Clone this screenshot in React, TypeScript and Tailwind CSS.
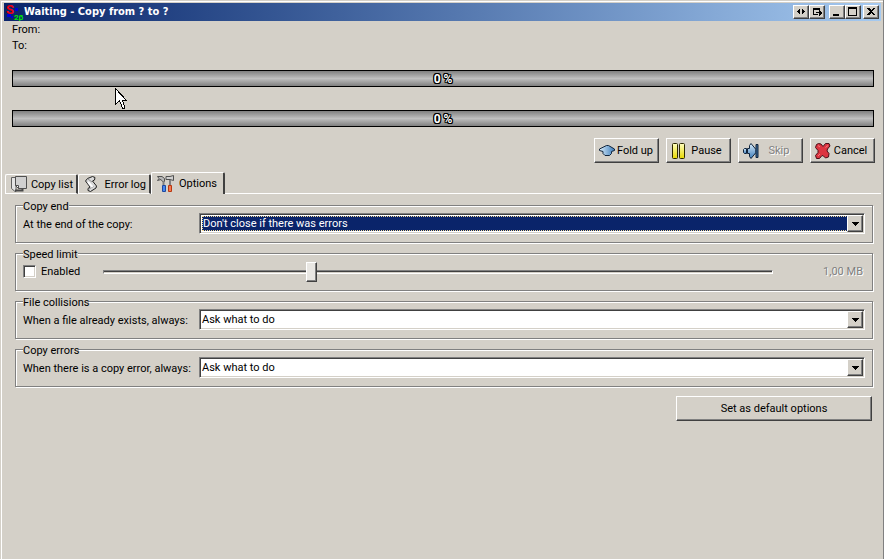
import { useState, type ReactNode } from 'react'

const raised = 'border border-t-white border-l-white border-r-[#404040] border-b-[#404040] bg-[#d4d0c8] shadow-[inset_-1px_-1px_0_#808080]'

const endChoices = ["Don't close if there was errors", "Don't close", 'Close']
const collisionChoices = ['Ask what to do', 'Cancel the copy', 'Skip', 'Overwrite', 'Rename']
const errorChoices = ['Ask what to do', 'Cancel the copy', 'Skip', 'Try again']

export default function App() {
  const [limited, setLimited] = useState(false)
  const [speed, setSpeed] = useState(308)

  return (
    <main className="relative min-h-screen border-r border-r-[#808080] bg-[#d4d0c8] pt-px pl-px font-[Roboto,'Liberation_Sans',sans-serif] text-[11px] leading-4 text-black">
      <div className="min-h-[558px] border-t border-l border-white pt-px pr-[2px] pl-[2px]">
        <TitleBar />

        <section className="pt-px pr-[7px] pl-2">
          <p className="h-4">From:</p>
          <p className="mb-4 h-4">To:</p>
          <ProgressBar value={0} />
          <div className="h-[23px]" />
          <ProgressBar value={0} />
          <div className="-mr-px mt-[11px] flex justify-end gap-[7px]">
            <ToolButton icon={<FoldIcon />} label="Fold up" />
            <ToolButton icon={<PauseIcon />} label="Pause" />
            <ToolButton icon={<SkipIcon />} label="Skip" disabled />
            <ToolButton icon={<CancelIcon />} label="Cancel" />
          </div>
        </section>

        <div role="tablist" className="mt-[9px] flex items-end pl-px">
          <Tab icon={<ListIcon />} label="Copy list" />
          <Tab icon={<LogIcon />} label="Error log" />
          <Tab icon={<ToolsIcon />} label="Options" active />
          <div className="h-px grow bg-white" />
        </div>

        <section role="tabpanel" className="flex flex-col gap-1 pt-[5px] pr-2 pl-[11px]">
          <Group title="Copy end">
            <label htmlFor="end" className="w-[176px] shrink-0 pt-[2px]">At the end of the copy:</label>
            <Combo id="end" choices={endChoices} highlighted />
          </Group>
          <Group title="Speed limit">
            <label className="flex w-[80px] shrink-0 items-center gap-[5px]">
              <input
                type="checkbox"
                checked={limited}
                onChange={e => setLimited(e.target.checked)}
                className="size-[13px] appearance-none border border-t-[#808080] border-r-white border-b-white border-l-[#808080] bg-white shadow-[inset_1px_1px_0_#404040,inset_-1px_-1px_0_#d4d0c8] checked:bg-[#404040]"
              />
              Enabled
            </label>
            <input
              type="range"
              aria-label="Speed limit"
              max={1000}
              value={speed}
              onChange={e => setSpeed(Number(e.target.value))}
              className="h-5 min-w-0 grow appearance-none bg-transparent [&::-webkit-slider-runnable-track]:h-1 [&::-webkit-slider-runnable-track]:border [&::-webkit-slider-runnable-track]:border-t-[#808080] [&::-webkit-slider-runnable-track]:border-r-white [&::-webkit-slider-runnable-track]:border-b-white [&::-webkit-slider-runnable-track]:border-l-[#808080] [&::-webkit-slider-runnable-track]:bg-[linear-gradient(#404040_50%,#d4d0c8_50%)] [&::-webkit-slider-thumb]:-mt-[9px] [&::-webkit-slider-thumb]:h-5 [&::-webkit-slider-thumb]:w-[11px] [&::-webkit-slider-thumb]:appearance-none [&::-webkit-slider-thumb]:border [&::-webkit-slider-thumb]:border-t-white [&::-webkit-slider-thumb]:border-r-[#404040] [&::-webkit-slider-thumb]:border-b-[#404040] [&::-webkit-slider-thumb]:border-l-white [&::-webkit-slider-thumb]:bg-[#e9e7e3] [&::-webkit-slider-thumb]:shadow-[inset_-1px_-1px_0_#808080]"
            />
            <span className="w-[92px] shrink-0 pr-[2px] text-right text-[#808080] [text-shadow:1px_1px_0_white]">1,00 MB</span>
          </Group>
          <Group title="File collisions">
            <label htmlFor="collision" className="w-[176px] shrink-0 pt-[2px]">When a file already exists, always:</label>
            <Combo id="collision" choices={collisionChoices} />
          </Group>
          <Group title="Copy errors">
            <label htmlFor="error" className="w-[176px] shrink-0 pt-[2px]">When there is a copy error, always:</label>
            <Combo id="error" choices={errorChoices} />
          </Group>
          <button className={`mt-[5px] mr-px h-[25px] w-[196px] self-end ${raised}`}>Set as default options</button>
        </section>
      </div>

      <svg className="pointer-events-none absolute top-[88px] left-[115px]" width="12" height="21" shapeRendering="crispEdges">
        <path d="M0.5 0.5V16.5L4.5 12.5L7.5 20H9.5V18L7.5 12.5H11.5Z" fill="white" stroke="black" />
      </svg>
    </main>
  )
}

function TitleBar() {
  return (
    <header className="flex h-[18px] items-center bg-linear-to-r from-[#0a246a] to-[#a6caf0] pr-[2px] pl-[2px]">
      <svg width="16" height="16" className="shrink-0 overflow-visible">
        <path d="M9 4h3v3h-3zM1 10h4v3h-4zM5 12h2v2h-2z" fill="#0000d8" />
        <text x="0" y="10" fontSize="13" fontWeight="bold" fill="#f00010">S</text>
        <text x="8" y="16" fontSize="8" fontWeight="bold" fill="#00e800">2β</text>
      </svg>
      <h1 className="ml-[2px] grow font-['DejaVu_Sans_Condensed','DejaVu_Sans',sans-serif] text-[11px] font-bold text-white">
        Waiting - Copy from ? to ?
      </h1>
      <CaptionButton label="Resize"><path d="M6 3v5L3 5.5zM8 3v5L11 5.5z" /></CaptionButton>
      <CaptionButton label="Send to tray"><path d="M3 2h7v2H4v4h4v1H3zM9 3h1v2h-1zM6 6h3V4l3 3-3 3V7H6z" /></CaptionButton>
      <span className="w-1" />
      <CaptionButton label="Minimize"><path d="M3 8h6v2H3z" /></CaptionButton>
      <CaptionButton label="Maximize"><path fillRule="evenodd" d="M2 1h9v9H2zM3 3v6h7V3z" /></CaptionButton>
      <span className="w-[2px]" />
      <CaptionButton label="Close"><path d="M3 2h2l2 2 2-2h2L8 5.5 11 9H9L7 7 5 9H3l3-3.500z" /></CaptionButton>
    </header>
  )
}

function CaptionButton({ label, children }: { label: string; children: ReactNode }) {
  return (
    <button aria-label={label} className={`h-[14px] w-4 shrink-0 ${raised}`}>
      <svg width="14" height="12" shapeRendering="crispEdges">{children}</svg>
    </button>
  )
}

function ProgressBar({ value }: { value: number }) {
  return (
    <div
      role="progressbar"
      aria-valuenow={value}
      className="flex h-[17px] items-center justify-center border border-black bg-linear-to-b from-[#808080] via-[#c0c0c0] to-[#808080] text-[12px] leading-[14px] font-bold text-white [text-shadow:1px_0_black,-1px_0_black,0_1px_black,0_-1px_black,1px_1px_black,-1px_-1px_black,1px_-1px_black,-1px_1px_black]"
    >
      {value} %
    </div>
  )
}

function ToolButton({ icon, label, disabled }: { icon: ReactNode; label: string; disabled?: boolean }) {
  return (
    <button disabled={disabled} className={`flex h-[25px] w-[65px] items-center pr-1 pl-1 ${raised}`}>
      {icon}
      <span className={`grow text-center whitespace-nowrap ${disabled ? 'text-[#808080] [text-shadow:1px_1px_0_white]' : ''}`}>
        {label}
      </span>
    </button>
  )
}

function Tab({ icon, label, active }: { icon: ReactNode; label: string; active?: boolean }) {
  const look = active
    ? 'h-[22px] w-[74px] pb-px pr-[6px]'
    : 'h-[20px] w-[73px] border-b border-b-white pr-[3px]'
  return (
    <button role="tab" aria-selected={!!active} className={`flex items-center justify-between rounded-t-[2px] border-t border-r-2 border-l border-t-white border-r-[#404040] border-l-white pl-[5px] whitespace-nowrap ${look}`}>
      {icon}
      <span className="pt-[2px]">{label}</span>
    </button>
  )
}

function Group({ title, children }: { title: string; children: ReactNode }) {
  return (
    <fieldset className="min-w-0 border border-[#808080] px-[7px] pt-[2px] pb-2 shadow-[inset_1px_1px_0_white,1px_1px_0_white]">
      <legend className="h-3 bg-[#d4d0c8] leading-[16px]">{title}</legend>
      <div className="flex h-[21px] items-center">{children}</div>
    </fieldset>
  )
}

function Combo({ id, choices, highlighted }: { id: string; choices: string[]; highlighted?: boolean }) {
  return (
    <div className="relative h-[21px] grow border border-t-[#808080] border-r-white border-b-white border-l-[#808080] bg-white p-[2px] shadow-[inset_1px_1px_0_#404040,inset_-1px_-1px_0_#d4d0c8]">
      <select
        id={id}
        className={`block w-full appearance-none outline-none ${
          highlighted ? 'h-[15px] border border-dotted border-[#f5db95] bg-[#0a246a] leading-[13px] text-white' : 'h-4 bg-white leading-4'
        }`}
      >
        {choices.map(c => <option key={c}>{c}</option>)}
      </select>
      <span className={`pointer-events-none absolute top-px right-px flex h-[17px] w-4 items-center justify-center ${raised}`}>
        <svg width="7" height="4" shapeRendering="crispEdges"><path d="M0 0h7v1H0zM1 1h5v1H1zM2 2h3v1H2zM3 3h1v1H3z" /></svg>
      </span>
    </div>
  )
}

function FoldIcon() {
  return (
    <svg width="17" height="16" className="shrink-0">
      <defs>
        <linearGradient id="fold">
          <stop offset="0" stopColor="#d8ecfa" />
          <stop offset="1" stopColor="#3c7cba" />
        </linearGradient>
      </defs>
      <path d="M7.500 2.500H9.500L15.500 6V7.500L12.500 8.500V10.500L10.500 12.500H6L4 10.500V8.500L0.500 7.500V6Z" fill="url(#fold)" stroke="#10243c" />
    </svg>
  )
}

function PauseIcon() {
  return (
    <svg width="16" height="16" className="shrink-0">
      <defs>
        <linearGradient id="bar" x1="0" y1="0" x2="0" y2="1">
          <stop offset="0" stopColor="#ffffc0" />
          <stop offset="1" stopColor="#e8d800" />
        </linearGradient>
      </defs>
      <rect x="1.500" y="0.500" width="5" height="15" rx="1" fill="url(#bar)" stroke="#2c2800" />
      <rect x="8.500" y="0.500" width="5" height="15" rx="1" fill="url(#bar)" stroke="#2c2800" />
    </svg>
  )
}

function SkipIcon() {
  return (
    <svg width="17" height="16" className="shrink-0">
      <defs>
        <linearGradient id="skip" x1="0" y1="0" x2="0" y2="1">
          <stop offset="0" stopColor="#d8ecfa" />
          <stop offset="1" stopColor="#3c7cba" />
        </linearGradient>
      </defs>
      <path d="M1.500 5.500H3.500V10.500H1.500L0.500 9.500V6.500Z" fill="url(#skip)" stroke="#10243c" />
      <path d="M4.500 5.500H6.500V2.500L8 0.500L13 6.500V9.500L8 15.500L6.500 13.500V10.500H4.500Z" fill="url(#skip)" stroke="#10243c" />
      <path d="M13 1.500H15V14.500H13Z" fill="#3c6c9c" stroke="#10243c" />
    </svg>
  )
}

function CancelIcon() {
  return (
    <svg width="16" height="16" className="shrink-0">
      <path d="M1.500 1.500L3.500 0.500L6 1L8 3.500L10.500 0.500L14 0.500L15 3L12.500 6L12 8L14 10.500L13.500 14L10.500 15L8.500 13L7 12.500L4.500 15.500L1.500 15.500L0.500 12.500L3 9.500L3 7.500L0.500 4.500Z" fill="#dc3440" stroke="#481018" />
      <path d="M3 2.500L5 4M10.500 4.500L13 2.500M3 13L5 11" fill="none" stroke="#f47c80" />
    </svg>
  )
}

function ListIcon() {
  return (
    <svg width="17" height="16" className="shrink-0">
      <path d="M0.500 1.500H5V15.500H4L0.500 12.500Z" fill="#e4e4e4" stroke="#606060" />
      <path d="M4 14.500H11.500V12.500" fill="none" stroke="#484848" strokeWidth="2" />
      <path d="M4.500 0.500H15.500V12.500H7.500L4.500 9.500Z" fill="#d0d0d0" stroke="#505050" />
      <path d="M4.500 9.500H7.500V12.500Z" fill="white" stroke="#505050" />
    </svg>
  )
}

function LogIcon() {
  return (
    <svg width="16" height="16" className="shrink-0">
      <path d="M3.500 2.500L8.500 0.500L11 1.500L10.500 4L8.500 5L12.500 10L12 12L6.500 15.500L4 14.500V12.500L6 11L1.500 5Z" fill="#d8d8d8" stroke="#202020" />
      <path d="M4 3L8 6M5 13L9.500 10.500" stroke="#909090" />
      <path d="M4 6L8.500 11" stroke="white" strokeWidth="2" />
    </svg>
  )
}

function ToolsIcon() {
  return (
    <svg width="17" height="17" className="shrink-0">
      <path d="M0.500 1.500H5L7.500 3.500V6.500H5.500L4 4.500L0.500 5.500L2 3.500Z" fill="#b8b8b8" stroke="#505050" />
      <path d="M9 1.500H13L16.500 0.500V5.500L13 4.500H9Z" fill="#d0d0d0" stroke="#505050" />
      <path d="M6.500 6V10M13 5V10" stroke="#808080" strokeWidth="2" />
      <path d="M5.500 10.500H8.500V16.500H5.500Z" fill="#4888f0" stroke="#1c48a0" />
      <path d="M11.500 10.500H14.500V16.500H11.500Z" fill="#f87850" stroke="#b83810" />
    </svg>
  )
}
